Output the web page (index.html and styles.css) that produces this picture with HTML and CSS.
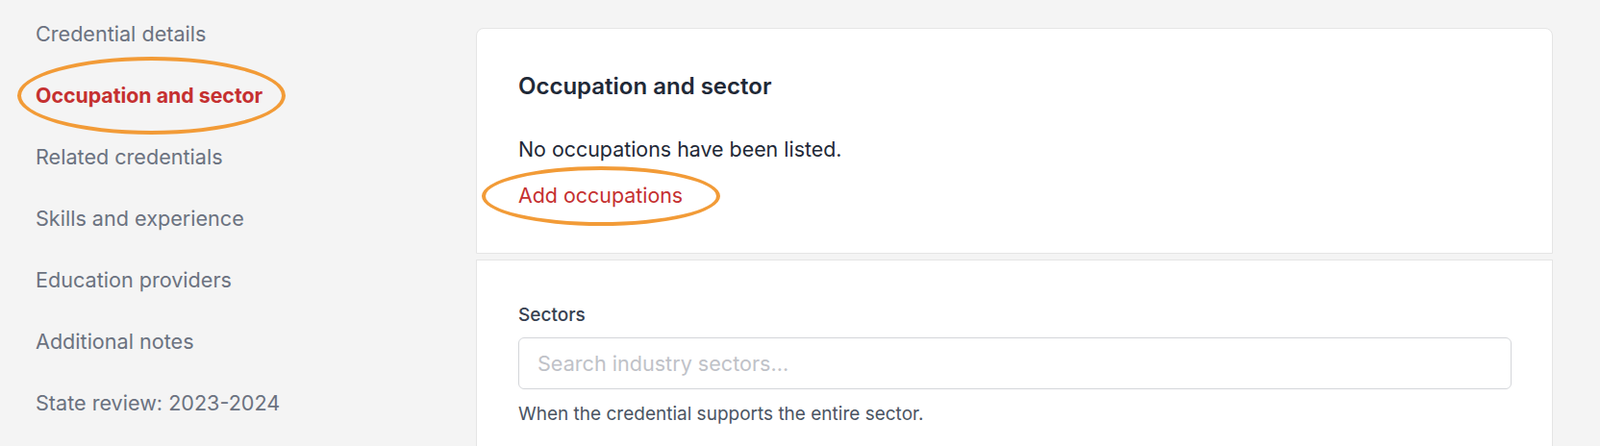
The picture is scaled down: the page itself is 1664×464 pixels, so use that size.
FILE: index.html
```html
<!DOCTYPE html>
<html lang="en">
<head>
<meta charset="utf-8">
<title>Occupation and sector</title>
<link rel="stylesheet" href="styles.css">
</head>
<body>
<div class="page">
  <nav class="sidebar">
    <a class="nav-item" href="#">Credential details</a>
    <a class="nav-item active" href="#">Occupation and sector<span class="mark mark-nav"></span></a>
    <a class="nav-item" href="#">Related credentials</a>
    <a class="nav-item" href="#">Skills and experience</a>
    <a class="nav-item" href="#">Education providers</a>
    <a class="nav-item" href="#">Additional notes</a>
    <a class="nav-item" href="#">State review: 2023-2024</a>
  </nav>
  <main class="content">
    <section class="card card-top">
      <h2 class="card-title">Occupation and sector</h2>
      <p class="empty-text">No occupations have been listed.</p>
      <a class="add-link" href="#">Add occupations<span class="mark mark-add"></span></a>
    </section>
    <section class="card card-bottom">
      <label class="field-label" for="sectors">Sectors</label>
      <input class="field-input" id="sectors" type="text" placeholder="Search industry sectors...">
      <p class="field-help">When the credential supports the entire sector.</p>
    </section>
  </main>
</div>
</body>
</html>
```

FILE: styles.css
```css
* { box-sizing: border-box; }

html, body {
  margin: 0;
  padding: 0;
  background: #f4f4f4;
  font-family: Inter, "Noto Sans", "Liberation Sans", sans-serif;
  -webkit-font-smoothing: antialiased;
}

.page {
  display: flex;
  align-items: flex-start;
  height: 464px;
  overflow: hidden;
}

.sidebar {
  width: 495px;
  flex: none;
  display: flex;
  flex-direction: column;
  padding: 3px 0 0 37px;
}

.nav-item {
  position: relative;
  display: block;
  align-self: flex-start;
  font-size: 21.6px;
  line-height: 30px;
  padding: 17px 0;
  color: #6b7280;
  text-decoration: none;
  white-space: nowrap;
}

.nav-item.active {
  color: #c53030;
  font-weight: 700;
  font-size: 21.3px;
}

.mark {
  position: absolute;
  border: 4px solid #f29b37;
  border-radius: 50%;
  pointer-events: none;
}

.mark-nav {
  left: -19px;
  top: -8px;
  width: 279px;
  height: 81px;
}

.content {
  width: 1120px;
  flex: none;
  display: flex;
  flex-direction: column;
  gap: 6px;
  padding-top: 29px;
}

.card {
  background: #ffffff;
  border: 1px solid #e5e5e5;
  padding: 0 43px;
}

.card-top {
  border-radius: 8px 8px 0 0;
  height: 235px;
  padding-top: 46px;
}

.card-bottom {
  height: 200px;
  padding-top: 45px;
}

.card-title {
  margin: 0;
  font-size: 24px;
  line-height: 28px;
  font-weight: 600;
  color: #1f2937;
}

.empty-text {
  margin: 37px 0 0;
  font-size: 21.4px;
  line-height: 28px;
  color: #1f2937;
}

.add-link {
  position: relative;
  display: inline-block;
  margin-top: 20px;
  font-size: 21.4px;
  line-height: 28px;
  color: #c53030;
  text-decoration: none;
}

.mark-add {
  left: -38px;
  top: -16px;
  width: 248px;
  height: 62px;
}

.field-label {
  display: block;
  font-size: 19px;
  line-height: 24px;
  font-weight: 500;
  color: #374151;
}

.field-input {
  display: block;
  width: 1033px;
  height: 54px;
  margin-top: 11px;
  padding: 0 19px;
  border: 1px solid #d4d6da;
  border-radius: 6px;
  font-family: inherit;
  font-size: 21.6px;
  color: #1f2937;
  background: #fff;
  outline: none;
}

.field-input::placeholder {
  color: #bfc2c8;
}

.field-help {
  margin: 14px 0 0;
  font-size: 19px;
  line-height: 24px;
  color: #4b5563;
}
```
